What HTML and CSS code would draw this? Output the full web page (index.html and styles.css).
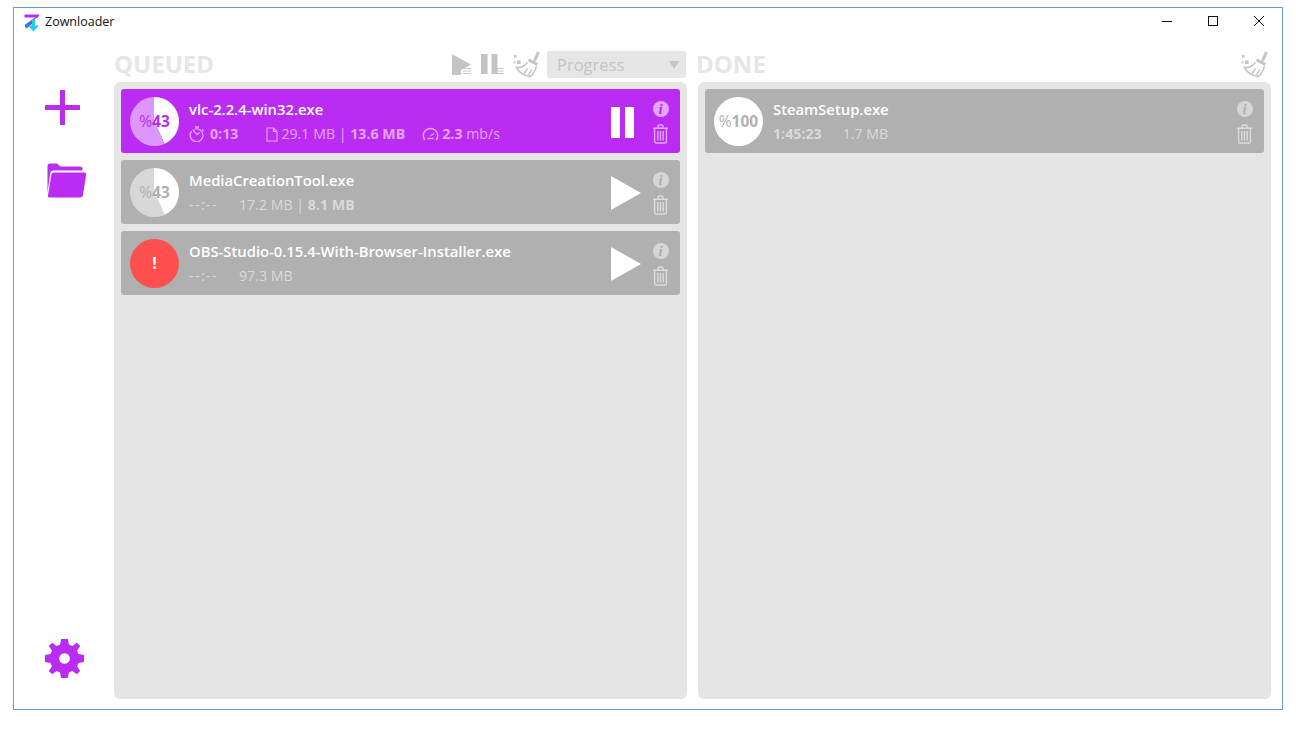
FILE: index.html
```html
<!DOCTYPE html>
<html lang="en">
<head>
    <meta charset="UTF-8">
    <meta name="viewport" content="width=device-width, initial-scale=1.0">
    <title>Zownloader</title>
    <link rel="stylesheet" href="styles.css">
</head>
<body>
    <svg class="defs" width="0" height="0">
        <defs>
            <symbol id="broom" viewBox="0 0 27 27">
                <path d="M25.5 1 L21.5 10" fill="none" stroke="#c4c4c4" stroke-width="3"/>
                <path d="M15.5 8.8 L24.5 13.5" fill="none" stroke="#c4c4c4" stroke-width="3"/>
                <path d="M14.5 11.5 C11.5 15 7.5 17 3.5 16.5 C5.5 21 11 25 17 25.5 C20.5 23 22.8 19 23.3 15" fill="none" stroke="#c4c4c4" stroke-width="1.6"/>
                <path d="M11 22.5 L14.5 17.5 M15.5 24 L18.5 18.5" fill="none" stroke="#c4c4c4" stroke-width="1.4"/>
                <rect x="1" y="4" width="2.6" height="2.6" fill="#c4c4c4"/>
                <rect x="4" y="9.5" width="3.6" height="3.6" fill="#c4c4c4"/>
                <rect x="0.5" y="10.5" width="2" height="2" fill="#c4c4c4"/>
            </symbol>
            <symbol id="trash" viewBox="0 0 17 20">
                <path d="M1 4.2 H16 M6 4 V2.4 Q6 1 7.4 1 H9.6 Q11 1 11 2.4 V4 M2.6 4.4 V17.4 Q2.6 19 4.2 19 H12.8 Q14.4 19 14.4 17.4 V4.4 M5.8 7 V16.4 M8.5 7 V16.4 M11.2 7 V16.4" fill="none" stroke="currentColor" stroke-width="1.4"/>
            </symbol>
            <symbol id="play" viewBox="0 0 30 34">
                <path d="M0 0 L30 17 L0 34 Z" fill="#fff"/>
            </symbol>
        </defs>
    </svg>

    <div class="window">
        <div class="titlebar">
            <svg class="logo" width="16" height="18" viewBox="0 0 16 18">
                <path d="M0.5 0.5 H15.5 L14 3.5 H0.5 Z" fill="#bb2cf3"/>
                <path d="M15.5 1.5 L11 3.5 L0.8 11 L2 14.5 L8 10 L10.5 5.5 Z" fill="#6a5ce6"/>
                <path d="M8 6 H11 V11.5 H15 L9.5 17.5 L4 11.5 H8 Z" fill="#22cde8"/>
                <path d="M0.8 11 L5 8 V12.5 L2 14.5 Z" fill="#2f86e6"/>
            </svg>
            <span class="app-name">Zownloader</span>
            <div class="win-controls">
                <svg width="12" height="12" viewBox="0 0 12 12"><path d="M1 6.5 H11" stroke="#111" fill="none"/></svg>
                <svg width="12" height="12" viewBox="0 0 12 12"><rect x="1.5" y="1.5" width="9" height="9" stroke="#111" fill="none"/></svg>
                <svg width="12" height="12" viewBox="0 0 12 12"><path d="M1 1 L11 11 M11 1 L1 11" stroke="#111" fill="none"/></svg>
            </div>
        </div>

        <div class="main">
            <div class="sidebar">
                <div class="side-top">
                    <svg width="35" height="35" viewBox="0 0 35 35"><path d="M15 0 H20 V15 H35 V20 H20 V35 H15 V20 H0 V15 H15 Z" fill="#bb2cf3"/></svg>
                    <svg class="folder" width="40" height="35" viewBox="0 0 40 35">
                        <path d="M0.5 30 V3 Q0.5 0.5 3 0.5 H10 L13.5 3.5 H33 Q35.5 3.5 35.5 6 V7.5 H6 Q3.6 7.5 3.2 10 L0.5 30 Z" fill="#bb2cf3"/>
                        <path d="M6.8 9.5 H37.5 Q39.5 9.5 39.2 11.5 L36 32 Q35.6 34.5 33 34.5 H2.6 Q0.6 34.5 1 32.5 L4.4 11.5 Q4.8 9.5 6.8 9.5 Z" fill="#bb2cf3"/>
                    </svg>
                </div>
                <svg width="39" height="39" viewBox="0 0 40 40">
                    <path fill-rule="evenodd" fill="#bb2cf3" d="M16.5 0 H23.5 L24.5 5.6 L28 7.1 L32.7 3.9 L36.1 7.3 L32.9 12 L34.4 15.5 L40 16.5 V23.5 L34.4 24.5 L32.9 28 L36.1 32.7 L32.7 36.1 L28 32.9 L24.5 34.4 L23.5 40 H16.5 L15.5 34.4 L12 32.9 L7.3 36.1 L3.9 32.7 L7.1 28 L5.6 24.5 L0 23.5 V16.5 L5.6 15.5 L7.1 12 L3.9 7.3 L7.3 3.9 L12 7.1 L15.5 5.6 Z M20 14.5 A5.5 5.5 0 1 0 20 25.5 A5.5 5.5 0 1 0 20 14.5 Z"/>
                </svg>
            </div>

            <div class="column queued">
                <div class="column-head">
                    <span class="column-title">QUEUED</span>
                    <div class="tools">
                        <svg width="20" height="21" viewBox="0 0 20 21">
                            <path d="M0 0 L19 10.5 L9 16 V21 H0 Z" fill="#c4c4c4"/>
                            <path d="M10.5 14.5 H19 M10.5 17 H19 M10.5 19.5 H19" stroke="#c4c4c4"/>
                        </svg>
                        <svg width="23" height="21" viewBox="0 0 23 21">
                            <rect x="0" y="0" width="6.5" height="20" fill="#c4c4c4"/>
                            <rect x="10.5" y="0" width="6" height="20" fill="#c4c4c4"/>
                            <path d="M13.5 14.5 H22.5 M13.5 17 H22.5 M13.5 19.5 H22.5" stroke="#c4c4c4"/>
                        </svg>
                        <svg class="broom" width="27" height="27"><use href="#broom"/></svg>
                        <div class="sort-select">
                            <span>Progress</span>
                            <i class="caret"></i>
                        </div>
                    </div>
                </div>
                <div class="panel">
                    <div class="card active">
                        <div class="pie" style="--pct: 43%"><span class="pie-text">%<b>43</b></span></div>
                        <div class="info">
                            <div class="name">vlc-2.2.4-win32.exe</div>
                            <div class="meta">
                                <svg class="meta-icon" width="16" height="16" viewBox="0 0 16 16"><path d="M6 1 H10 M13 3.5 L14.5 5 M2.8 5 A6.4 6.4 0 1 0 5.6 3.2 M3.8 3.8 L8 8.6 L10.6 6.6" fill="none" stroke="currentColor" stroke-width="1.3"/></svg>
                                <b class="time">0:13</b>
                                <svg class="meta-icon file" width="12" height="15" viewBox="0 0 12 15"><path d="M1 1 H7.5 L11 4.5 V14 H1 Z M7.5 1 V4.5 H11" fill="none" stroke="currentColor" stroke-width="1.1"/></svg>
                                <span class="size">29.1 MB | <b>13.6 MB</b></span>
                                <svg class="meta-icon speed" width="17" height="15" viewBox="0 0 17 15"><path d="M2.8 13 A7.2 7.2 0 1 1 14.2 13 M8.5 9 L12 6.5 M5.5 11.5 H11.5" fill="none" stroke="currentColor" stroke-width="1.5"/></svg>
                                <span class="rate"><b>2.3</b> mb/s</span>
                            </div>
                        </div>
                        <div class="big-btn pause"><i></i><i></i></div>
                        <div class="actions">
                            <span class="info-btn">i</span>
                            <svg class="trash" width="17" height="20"><use href="#trash"/></svg>
                        </div>
                    </div>

                    <div class="card">
                        <div class="pie" style="--pct: 43%"><span class="pie-text">%<b>43</b></span></div>
                        <div class="info">
                            <div class="name">MediaCreationTool.exe</div>
                            <div class="meta">
                                <span class="time dashes">--:--</span>
                                <span class="size">17.2 MB | <b>8.1 MB</b></span>
                            </div>
                        </div>
                        <svg class="big-btn play" width="30" height="34"><use href="#play"/></svg>
                        <div class="actions">
                            <span class="info-btn">i</span>
                            <svg class="trash" width="17" height="20"><use href="#trash"/></svg>
                        </div>
                    </div>

                    <div class="card">
                        <div class="pie error"><span class="pie-text"><b>!</b></span></div>
                        <div class="info">
                            <div class="name">OBS-Studio-0.15.4-With-Browser-Installer.exe</div>
                            <div class="meta">
                                <span class="time dashes">--:--</span>
                                <span class="size">97.3 MB</span>
                            </div>
                        </div>
                        <svg class="big-btn play" width="30" height="34"><use href="#play"/></svg>
                        <div class="actions">
                            <span class="info-btn">i</span>
                            <svg class="trash" width="17" height="20"><use href="#trash"/></svg>
                        </div>
                    </div>
                </div>
            </div>

            <div class="column done">
                <div class="column-head">
                    <span class="column-title">DONE</span>
                    <div class="tools">
                        <svg class="broom" width="27" height="27"><use href="#broom"/></svg>
                    </div>
                </div>
                <div class="panel">
                    <div class="card">
                        <div class="pie" style="--pct: 100%"><span class="pie-text">%<b>100</b></span></div>
                        <div class="info">
                            <div class="name">SteamSetup.exe</div>
                            <div class="meta">
                                <b class="time">1:45:23</b>
                                <span class="size">1.7 MB</span>
                            </div>
                        </div>
                        <div class="actions">
                            <span class="info-btn">i</span>
                            <svg class="trash" width="17" height="20"><use href="#trash"/></svg>
                        </div>
                    </div>
                </div>
            </div>
        </div>
    </div>
</body>
</html>
```

FILE: styles.css
```css
body {
    margin: 0;
    padding: 7px 13px 20px;
    height: 703px;
    background-color: #ffffff;
    font-family: "Open Sans", "Noto Sans", sans-serif;
    overflow: hidden;
}

.defs {
    position: absolute;
}

.window {
    box-sizing: border-box;
    width: 1270px;
    height: 703px;
    border: 1px solid #6b9bcb;
    display: flex;
    flex-direction: column;
}

.titlebar {
    box-sizing: border-box;
    height: 30px;
    display: flex;
    align-items: center;
    padding: 0 0 3px 10px;
    flex-shrink: 0;
}

.logo {
    margin: 3px 5px 0 0;
}

.app-name {
    font-size: 12.5px;
    color: #111111;
}

.win-controls {
    margin: 0 17px 2px auto;
    display: flex;
    gap: 34px;
}

.main {
    flex: 1;
    display: flex;
    min-height: 0;
    padding: 0 11px 10px 0;
}

.sidebar {
    width: 100px;
    flex-shrink: 0;
    display: flex;
    flex-direction: column;
    justify-content: space-between;
    align-items: flex-start;
    padding: 52px 0 21px 31px;
    box-sizing: border-box;
}

.side-top {
    display: flex;
    flex-direction: column;
    gap: 38px;
}

.folder {
    margin-left: 2px;
}

.column {
    width: 573px;
    display: flex;
    flex-direction: column;
}

.done {
    margin-left: 11px;
}

.column-head {
    height: 44px;
    display: flex;
    align-items: flex-end;
    justify-content: space-between;
    flex-shrink: 0;
}

.column-title {
    font-size: 24px;
    font-weight: 700;
    line-height: 30px;
    color: #e6e6e6;
    margin-bottom: 3px;
}

.done .column-title {
    margin-left: -2px;
}

.tools {
    display: flex;
    align-items: center;
    margin: 0 1px 4px 0;
}

.tools svg + svg {
    margin-left: 9px;
}

.broom {
    margin-right: 3px;
}

.done .broom {
    margin-right: 2px;
}

.sort-select {
    width: 139px;
    height: 27px;
    margin-left: 4px;
    padding: 0 7px 0 10px;
    box-sizing: border-box;
    background-color: #e6e6e6;
    border-radius: 3px;
    display: flex;
    align-items: center;
    justify-content: space-between;
    font-size: 16.5px;
    color: #c4c4c4;
}

.caret {
    width: 0;
    height: 0;
    border-left: 5px solid transparent;
    border-right: 5px solid transparent;
    border-top: 8px solid #c4c4c4;
}

.panel {
    flex: 1;
    background-color: #e5e5e5;
    border-radius: 6px;
    padding: 7px;
    display: flex;
    flex-direction: column;
    gap: 7px;
}

.card {
    height: 64px;
    flex-shrink: 0;
    box-sizing: border-box;
    background-color: #b0b0b0;
    border-radius: 3px;
    padding: 0 11px 0 9px;
    display: flex;
    align-items: center;
    color: #dadada;
}

.card.active {
    background-color: #bb2cf3;
    color: #e4a5fb;
}

.pie {
    width: 49px;
    height: 49px;
    border-radius: 50%;
    flex-shrink: 0;
    background: conic-gradient(#ffffff 0 var(--pct), rgba(255, 255, 255, 0.5) var(--pct) 100%);
    display: flex;
    align-items: center;
    justify-content: center;
    color: #b0b0b0;
}

.active .pie {
    color: #bb2cf3;
}

.pie.error {
    background: #ff5050;
    color: #ffffff;
}

.pie-text {
    font-size: 15.5px;
}

.info {
    flex: 1;
    margin: 1px 0 0 10px;
    min-width: 0;
}

.name {
    font-size: 14.8px;
    font-weight: 600;
    color: #ffffff;
    line-height: 20px;
}

.meta {
    margin-top: 5px;
    font-size: 14.2px;
    line-height: 20px;
    display: flex;
    align-items: center;
}

.meta b {
    font-weight: 700;
}

.meta-icon {
    margin-right: 5px;
    flex-shrink: 0;
}

.dashes {
    letter-spacing: 1.4px;
}

.file {
    margin-left: 28px;
    margin-right: 3px;
}

.speed {
    margin-left: 17px;
    margin-right: 3px;
}

.size {
    margin-left: 21px;
}

.file + .size {
    margin-left: 0;
}

.big-btn {
    flex-shrink: 0;
    margin-right: 11px;
}

.play {
    margin-top: 2px;
}

.pause {
    width: 23px;
    height: 31px;
    display: flex;
    justify-content: space-between;
    margin-right: 18px;
    margin-top: 2px;
}

.pause i {
    width: 9px;
    background-color: #ffffff;
}

.actions {
    width: 17px;
    padding-top: 2px;
    display: flex;
    flex-direction: column;
    align-items: center;
    gap: 7px;
    color: #dcdcdc;
}

.active .actions {
    color: #e4a5fb;
}

.info-btn {
    width: 16px;
    height: 16px;
    border-radius: 50%;
    background-color: #d6d6d6;
    color: #b0b0b0;
    display: flex;
    align-items: center;
    justify-content: center;
    font-family: "Liberation Serif", serif;
    font-size: 15px;
    font-weight: 700;
    font-style: italic;
    line-height: 16px;
}

.active .info-btn {
    background-color: #e4a5fb;
    color: #bb2cf3;
}

.trash {
    display: block;
}
```
